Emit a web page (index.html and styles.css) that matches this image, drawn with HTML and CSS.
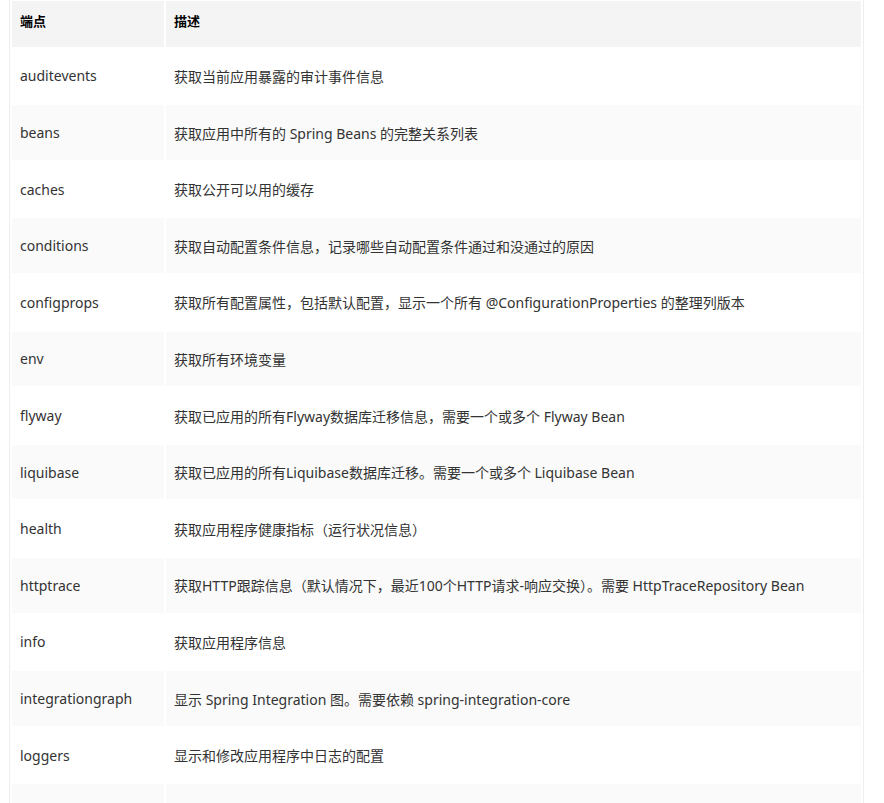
FILE: index.html
```html
<!DOCTYPE html>
<html lang="zh-CN">
<head>
<meta charset="utf-8">
<title>端点</title>
<link rel="stylesheet" href="styles.css">
</head>
<body>
<div class="page">
  <table class="endpoints">
    <thead>
      <tr><th class="col-name">端点</th><th>描述</th></tr>
    </thead>
    <tbody>
      <tr><td>auditevents</td><td>获取当前应用暴露的审计事件信息</td></tr>
      <tr><td>beans</td><td>获取应用中所有的 Spring Beans 的完整关系列表</td></tr>
      <tr><td>caches</td><td>获取公开可以用的缓存</td></tr>
      <tr><td>conditions</td><td>获取自动配置条件信息，记录哪些自动配置条件通过和没通过的原因</td></tr>
      <tr><td>configprops</td><td>获取所有配置属性，包括默认配置，显示一个所有 @ConfigurationProperties 的整理列版本</td></tr>
      <tr><td>env</td><td>获取所有环境变量</td></tr>
      <tr><td>flyway</td><td>获取已应用的所有Flyway数据库迁移信息，需要一个或多个 Flyway Bean</td></tr>
      <tr><td>liquibase</td><td>获取已应用的所有Liquibase数据库迁移。需要一个或多个 Liquibase Bean</td></tr>
      <tr><td>health</td><td>获取应用程序健康指标（运行状况信息）</td></tr>
      <tr><td>httptrace</td><td>获取HTTP跟踪信息（默认情况下，最近100个HTTP请求-响应交换）。需要 HttpTraceRepository Bean</td></tr>
      <tr><td>info</td><td>获取应用程序信息</td></tr>
      <tr><td>integrationgraph</td><td>显示 Spring Integration 图。需要依赖 spring-integration-core</td></tr>
      <tr><td>loggers</td><td>显示和修改应用程序中日志的配置</td></tr>
      <tr><td></td><td></td></tr>
    </tbody>
  </table>
</div>
</body>
</html>
```
FILE: styles.css
```css
html, body {
  margin: 0;
  padding: 0;
  background: #ffffff;
}
body {
  font-family: "Noto Sans", "Noto Sans CJK SC", sans-serif;
  color: #333333;
  overflow: hidden;
}
.page {
  margin: -1px 0 0 9px;
  width: 853px;
  border-left: 1px solid #eeeeee;
  border-right: 1px solid #eeeeee;
  min-height: 900px;
}
.endpoints {
  width: 100%;
  table-layout: fixed;
  border-collapse: separate;
  border-spacing: 2px;
  font-size: 14px;
}
.endpoints th {
  height: 45.7px;
  box-sizing: border-box;
  padding: 0 8px 7px;
  background: #f4f4f4;
  color: #000000;
  font-size: 13px;
  font-weight: 700;
  text-align: left;
  vertical-align: middle;
}
.endpoints th.col-name {
  width: 152px;
}
.endpoints td {
  height: 54.6px;
  box-sizing: border-box;
  padding: 0 8px;
  vertical-align: middle;
  text-align: left;
  white-space: nowrap;
}
.endpoints tbody tr:nth-child(even) td {
  background: #fafafa;
}
```
